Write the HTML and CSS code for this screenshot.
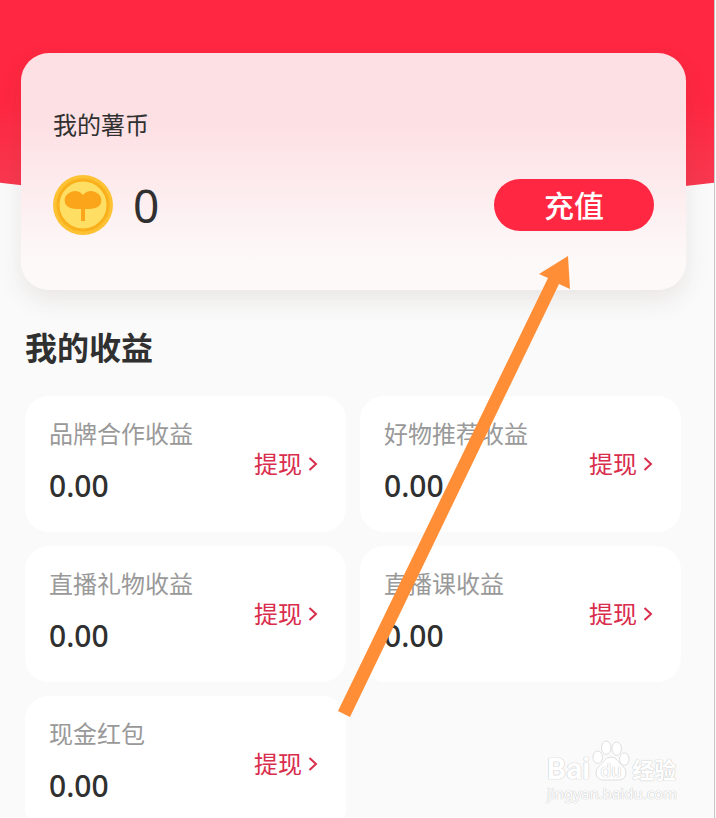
FILE: index.html
```html
<!DOCTYPE html>
<html lang="zh-CN">

<head>
    <meta charset="utf-8">
    <meta name="viewport" content="width=device-width, initial-scale=1">
    <title>我的薯币</title>
    <link rel="stylesheet" href="styles.css">
</head>

<body>
    <main class="page">
        <section class="wallet">
            <h2 class="wallet-title">我的薯币</h2>
            <div class="wallet-row">
                <svg class="coin" viewBox="0 0 60 60" aria-hidden="true">
                    <circle cx="30" cy="30" r="30" fill="#fcc233" />
                    <circle cx="30" cy="30" r="25" fill="#ffdf63" stroke="#f9b01c" stroke-width="3" />
                    <path d="M30 20C27 16 22 15 18 17C12 19 10 25 13 30C16 34 22 34 28 34V46H32V34C38 34 44 34 47 30C50 25 48 19 42 17C38 15 33 16 30 20Z" fill="#fba61a" />
                </svg>
                <span class="coin-count">0</span>
                <button class="recharge" type="button">充值</button>
            </div>
        </section>

        <section class="income">
            <h2 class="income-title">我的收益</h2>
            <div class="grid">
                <article class="card">
                    <div class="card-text">
                        <h3 class="card-name">品牌合作收益</h3>
                        <p class="card-sum">0.00</p>
                    </div>
                    <a class="withdraw" href="#">提现<svg class="chevron" viewBox="0 0 10 16" aria-hidden="true"><path d="M1.500 2L8 8L1.500 14" /></svg></a>
                </article>
                <article class="card">
                    <div class="card-text">
                        <h3 class="card-name">好物推荐收益</h3>
                        <p class="card-sum">0.00</p>
                    </div>
                    <a class="withdraw" href="#">提现<svg class="chevron" viewBox="0 0 10 16" aria-hidden="true"><path d="M1.500 2L8 8L1.500 14" /></svg></a>
                </article>
                <article class="card">
                    <div class="card-text">
                        <h3 class="card-name">直播礼物收益</h3>
                        <p class="card-sum">0.00</p>
                    </div>
                    <a class="withdraw" href="#">提现<svg class="chevron" viewBox="0 0 10 16" aria-hidden="true"><path d="M1.500 2L8 8L1.500 14" /></svg></a>
                </article>
                <article class="card">
                    <div class="card-text">
                        <h3 class="card-name">直播课收益</h3>
                        <p class="card-sum">0.00</p>
                    </div>
                    <a class="withdraw" href="#">提现<svg class="chevron" viewBox="0 0 10 16" aria-hidden="true"><path d="M1.500 2L8 8L1.500 14" /></svg></a>
                </article>
                <article class="card">
                    <div class="card-text">
                        <h3 class="card-name">现金红包</h3>
                        <p class="card-sum">0.00</p>
                    </div>
                    <a class="withdraw" href="#">提现<svg class="chevron" viewBox="0 0 10 16" aria-hidden="true"><path d="M1.500 2L8 8L1.500 14" /></svg></a>
                </article>
            </div>
        </section>

        <!-- arrow from the cards up to the recharge button -->
        <svg class="arrow" viewBox="0 0 232 464" aria-hidden="true">
            <path d="M230 2L232 35L221 30L12 463L0 457L210 24L201 20Z" fill="#ff8e36" />
        </svg>

        <div class="mark">
            <div class="mark-logo">
                <span class="mark-bai">Bai</span>
                <span class="mark-paw">
                    <svg class="paw" viewBox="0 0 40 44" aria-hidden="true">
                        <ellipse cx="6" cy="18" rx="5" ry="6.500" />
                        <ellipse cx="15" cy="8" rx="5" ry="7" />
                        <ellipse cx="26" cy="9" rx="5" ry="7" />
                        <ellipse cx="34" cy="20" rx="5" ry="6.500" />
                        <path d="M20 18C14 18 12 24 7 28C2 33 4 42 12 42C16 42 24 42 28 42C36 42 38 33 33 28C28 24 26 18 20 18Z" />
                    </svg>
                    <span class="mark-du">du</span>
                </span>
                <span class="mark-cn">经验</span>
            </div>
            <div class="mark-url">jingyan.baidu.com</div>
        </div>
    </main>
</body>

</html>
```
FILE: styles.css
```css
* {
    box-sizing: border-box;
}

body {
    margin: 0;
    background-color: #fafafa;
    color: #303030;
    font-family: "Noto Sans", "Noto Sans CJK SC", sans-serif;
    overflow: hidden;
}

h2,
h3,
p {
    margin: 0;
}

.page {
    position: relative;
    height: 100vh;
    margin-right: 1px;
    padding: 53px 28px 0 21px;
    border-right: 1px solid #c8c8c8;
    overflow: hidden;
}

/* red header with the curved bottom edge */
.page::before {
    content: "";
    position: absolute;
    top: 0;
    left: 0;
    right: 0;
    height: 203px;
    background: linear-gradient(#ff2741 50%, #f8384f 90%);
    clip-path: ellipse(115% 100% at 50% 0);
}

.wallet {
    position: relative;
    height: 237px;
    padding: 54px 32px 0;
    border-radius: 28px;
    background: linear-gradient(#fde0e4 30%, #fdf9f9 88%);
    box-shadow: 0 10px 24px rgba(90, 60, 50, 0.1);
}

.wallet-title {
    font-size: 24px;
    line-height: 36px;
    font-weight: 400;
}

.wallet-row {
    display: flex;
    align-items: center;
    height: 60px;
    margin-top: 32px;
}

.coin {
    width: 60px;
    height: 60px;
}

.coin-count {
    margin-left: 20px;
    font-size: 46px;
    line-height: 60px;
}

.recharge {
    width: 160px;
    height: 52px;
    margin-left: auto;
    border: 0;
    border-radius: 26px;
    background-color: #ff2741;
    color: #fff;
    font-family: inherit;
    font-size: 30px;
    font-weight: 500;
    line-height: 52px;
}

.income {
    padding: 34px 5px 0 4px;
}

.income-title {
    font-size: 32px;
    line-height: 48px;
    font-weight: 700;
}

.grid {
    display: grid;
    grid-template-columns: 1fr 1fr;
    gap: 14px;
    margin-top: 24px;
}

.card {
    display: flex;
    justify-content: space-between;
    align-items: center;
    height: 136px;
    padding: 0 28px 0 24px;
    border-radius: 24px;
    background-color: #fff;
}

.card-text {
    padding-bottom: 5px;
}

.card-name {
    color: #999;
    font-size: 24px;
    line-height: 36px;
    font-weight: 400;
}

.card-sum {
    margin-top: 12px;
    font-size: 30px;
    line-height: 44px;
    font-weight: 500;
}

.withdraw {
    display: flex;
    align-items: center;
    gap: 6px;
    color: #d92d4c;
    font-size: 24px;
    line-height: 36px;
    text-decoration: none;
}

.chevron {
    width: 10px;
    height: 16px;
    fill: none;
    stroke: #d92d4c;
    stroke-width: 2;
}

.arrow {
    position: absolute;
    left: 338px;
    top: 254px;
    width: 232px;
    height: 464px;
}

.mark {
    position: absolute;
    right: 37px;
    bottom: 15px;
    color: #fff;
    text-shadow: 0 0 1px #ccc, 0 0 1px #ccc, 0 0 1px #ddd;
}

.mark-logo {
    display: flex;
    align-items: flex-end;
    gap: 2px;
    height: 44px;
}

.mark-bai {
    font-family: Roboto, sans-serif;
    font-size: 30px;
    line-height: 28px;
    font-weight: 700;
}

.mark-paw {
    position: relative;
    width: 38px;
    height: 44px;
}

.paw {
    width: 38px;
    height: 44px;
    fill: #fff;
    stroke: #dcdcdc;
    stroke-width: 1;
}

.mark-du {
    position: absolute;
    left: 0;
    right: 0;
    bottom: 2px;
    font-family: Roboto, sans-serif;
    font-size: 19px;
    line-height: 20px;
    text-align: center;
}

.mark-cn {
    font-size: 22px;
    line-height: 28px;
    font-weight: 700;
}

.mark-url {
    font-size: 15px;
    line-height: 20px;
}
```
